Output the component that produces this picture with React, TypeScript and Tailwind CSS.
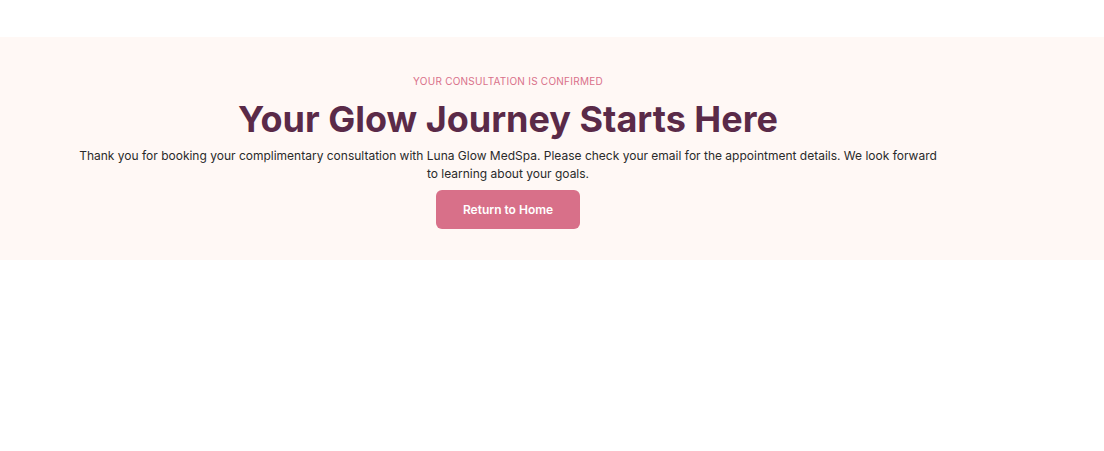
export default function App() {
  return (
    <div className="min-h-screen bg-white font-['Inter',sans-serif]">
      <div className="h-[37px]" />
      <section className="bg-[#fff8f5] pt-[36px] pb-[31px]">
        <div className="max-w-[1016px] flex flex-col items-center text-center">
          <p className="text-[10px] leading-4 uppercase tracking-wide text-[#d9708a]">
            Your consultation is confirmed
          </p>
          <h1 className="mt-[8px] text-[36px] leading-[44px] font-bold text-[#5a2a48]">
            Your Glow Journey Starts Here
          </h1>
          <p className="mt-[6px] max-w-[866px] text-[12px] leading-[18px] text-[#2a2a2a]">
            Thank you for booking your complimentary consultation with Luna Glow MedSpa. Please check your email for the appointment details. We look forward to learning about your goals.
          </p>
          <button className="mt-[7px] w-[144px] h-[39px] rounded-md bg-[#d87089] text-white text-[12px] font-semibold">
            Return to Home
          </button>
        </div>
      </section>
    </div>
  );
}
